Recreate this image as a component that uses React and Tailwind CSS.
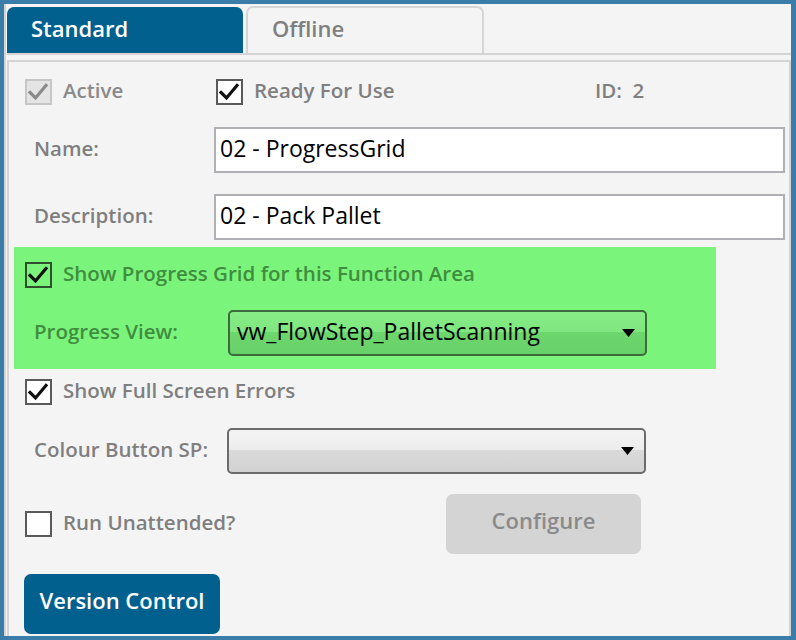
import React from 'react';

const font = { fontFamily: '"Open Sans", "Noto Sans", Arial, sans-serif' };

function Check({ color = '#111' }) {
  return (
    <svg width="27" height="26" viewBox="0 0 27 26" className="block">
      <polyline
        points="5,13.5 10.5,19 21,6.5"
        fill="none"
        stroke={color}
        strokeWidth="3.2"
        strokeLinecap="square"
      />
    </svg>
  );
}

// Checkbox + label pair used across the form
function CheckBox({ checked, disabled, label, tone = 'gray' }) {
  const boxClass = disabled
    ? 'border-[#c6c6c6] bg-[#e4e4e4]'
    : tone === 'green'
    ? 'border-[#2f4f2f] bg-transparent'
    : 'border-[#5a5a5a] bg-white';
  const textClass = disabled
    ? 'text-[#8a8a8a]'
    : tone === 'green'
    ? 'text-[#3f8e3f]'
    : 'text-[#7f7f7f]';
  return (
    <div className="flex items-center">
      <div className={`w-[27px] h-[26px] border-2 box-border flex items-center justify-center ${boxClass}`}>
        {checked && (
          <div className="-m-[2px]">
            <Check color={disabled ? '#8a8a8a' : '#111'} />
          </div>
        )}
      </div>
      <span className={`ml-[11px] pb-[4px] text-[20.5px] font-semibold leading-none ${textClass}`}>{label}</span>
    </div>
  );
}

function Arrow() {
  return (
    <svg width="13" height="8" viewBox="0 0 13 8" className="block">
      <polygon points="0,0 13,0 6.5,8" fill="#000" />
    </svg>
  );
}

export default function App() {
  return (
    <div style={font} className="w-[796px] h-[640px] bg-[#3a7da8] pl-[4px] pt-[4px] pr-[5px] pb-[4px] box-border">
      <div className="h-full bg-[#f4f4f4] border-l-2 border-[#d4d4d4] pl-[1px] flex flex-col box-border">
        {/* tabs */}
        <div className="flex items-end h-[51px] border-b-2 border-[#d4d4d4] pt-[2px] box-border">
          <div className="w-[236px] h-[46px] bg-[#02608f] rounded-t-[7px] flex items-center pl-[24px] pb-[4px] box-border">
            <span className="text-white text-[22px] font-semibold">Standard</span>
          </div>
          <div className="ml-[3px] w-[238px] h-[47px] border-2 border-b-0 border-[#d6d6d6] rounded-t-[7px] flex items-center pl-[24px] pb-[4px] box-border">
            <span className="text-[#7f7f7f] text-[22px] font-semibold">Offline</span>
          </div>
        </div>

        {/* panel */}
        <div className="mt-[5px] flex-1 border-2 border-b-0 border-[#d4d4d4] box-border">
          {/* row 1 */}
          <div className="mt-[17px] pl-[16px] flex items-center h-[26px]">
            <div className="w-[191px]">
              <CheckBox checked disabled label="Active" />
            </div>
            <div className="w-[379px]">
              <CheckBox checked label="Ready For Use" />
            </div>
            <span className="pb-[4px] text-[20.5px] font-semibold text-[#7f7f7f] leading-none">ID:&nbsp; 2</span>
          </div>

          {/* name */}
          <div className="mt-[22px] flex items-center">
            <span className="w-[205px] pl-[25px] pb-[4px] text-[20.5px] font-semibold text-[#7f7f7f]">Name:</span>
            <div className="w-[571px] h-[46px] border-2 border-[#b0b0b4] bg-white flex items-center pl-[4px] pb-[4px] box-border">
              <span className="text-[23px] text-black">02 - ProgressGrid</span>
            </div>
          </div>

          {/* description */}
          <div className="mt-[21px] flex items-center">
            <span className="w-[205px] pl-[25px] pb-[4px] text-[20.5px] font-semibold text-[#7f7f7f]">Description:</span>
            <div className="w-[571px] h-[46px] border-2 border-[#b0b0b4] bg-white flex items-center pl-[4px] pb-[4px] box-border">
              <span className="text-[23px] text-black">02 - Pack Pallet</span>
            </div>
          </div>

          {/* highlighted progress grid block */}
          <div className="mt-[7px] ml-[5px] w-[702px] h-[122px] bg-[#7bf47b] pt-[15px] box-border">
            <div className="pl-[11px]">
              <CheckBox checked tone="green" label="Show Progress Grid for this Function Area" />
            </div>
            <div className="mt-[22px] flex items-center">
              <span className="w-[214px] pl-[20px] pb-[4px] text-[20.5px] font-semibold text-[#3f8e3f]">Progress View:</span>
              <div className="w-[419px] h-[46px] rounded-[5px] border-2 border-[#3d6a3d] bg-[linear-gradient(to_bottom,#86ec86_0%,#80e680_48%,#6dd66d_48%,#68d068_100%)] flex items-center justify-between pl-[7px] pr-[10px] box-border">
                <span className="pb-[4px] text-[23px] text-black">vw_FlowStep_PalletScanning</span>
                <Arrow />
              </div>
            </div>
          </div>

          {/* full screen errors */}
          <div className="mt-[10px] pl-[16px]">
            <CheckBox checked label="Show Full Screen Errors" />
          </div>

          {/* colour button */}
          <div className="mt-[23px] flex items-center">
            <span className="w-[218px] pl-[25px] pb-[4px] text-[20.5px] font-semibold text-[#7f7f7f]">Colour Button SP:</span>
            <div className="w-[419px] h-[46px] rounded-[5px] border-2 border-[#6b6b6b] bg-[linear-gradient(to_bottom,#f4f4f4_0%,#ececec_48%,#dadada_48%,#d2d2d2_100%)] flex items-center justify-end pr-[10px] box-border">
              <Arrow />
            </div>
          </div>

          {/* unattended + configure */}
          <div className="mt-[20px] flex items-center h-[60px]">
            <div className="w-[437px] pl-[16px]">
              <CheckBox label="Run Unattended?" />
            </div>
            <button className="w-[195px] h-[60px] rounded-[7px] bg-[#d4d4d4] text-[#8a8a8a] text-[22px] font-semibold pb-[7px]">
              Configure
            </button>
          </div>

          {/* version control */}
          <div className="mt-[20px] pl-[15px]">
            <button className="w-[196px] h-[60px] rounded-[7px] bg-[#02608f] text-white text-[22px] font-semibold pb-[7px]">
              Version Control
            </button>
          </div>
        </div>
      </div>
    </div>
  );
}
